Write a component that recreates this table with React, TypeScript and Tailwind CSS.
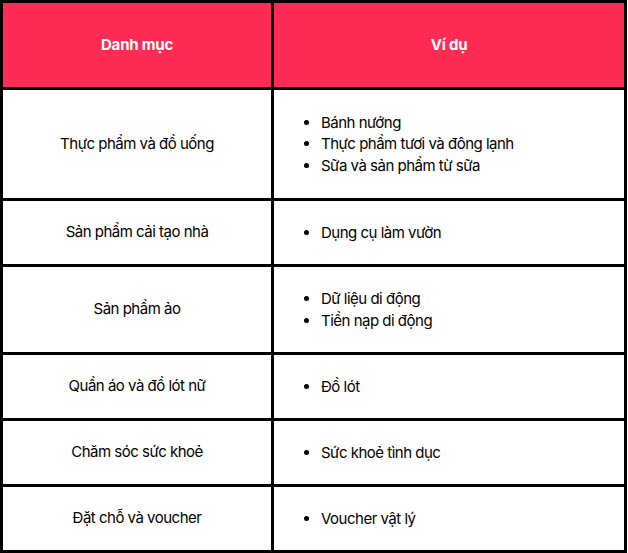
import { Fragment } from 'react';

const rows: { category: string; examples: string[] }[] = [
  {
    category: 'Thực phẩm và đồ uống',
    examples: ['Bánh nướng', 'Thực phẩm tươi và đông lạnh', 'Sữa và sản phẩm từ sữa'],
  },
  { category: 'Sản phẩm cải tạo nhà', examples: ['Dụng cụ làm vườn'] },
  { category: 'Sản phẩm ảo', examples: ['Dữ liệu di động', 'Tiền nạp di động'] },
  { category: 'Quần áo và đồ lót nữ', examples: ['Đồ lót'] },
  { category: 'Chăm sóc sức khoẻ', examples: ['Sức khoẻ tình dục'] },
  { category: 'Đặt chỗ và voucher', examples: ['Voucher vật lý'] },
];

export default function App() {
  return (
    <div className="w-[628px] h-[553px] bg-white" style={{ fontFamily: 'Inter, "Noto Sans", sans-serif' }}>
      <div className="w-[627px] grid grid-cols-[268px_350px] grid-rows-[84px_108px_63px_85px_63px_63px_63px] gap-[3px] p-[3px] bg-black text-[15px] tracking-[-0.5px] text-black">
        <div className="bg-[#fe2c55] flex items-center justify-center font-bold text-white tracking-[-0.2px]">Danh mục</div>
        <div className="bg-[#fe2c55] flex items-center justify-center font-bold text-white tracking-[-0.2px]">Ví dụ</div>
        {rows.map((row) => (
          <Fragment key={row.category}>
            <div className="bg-white flex items-center justify-center">{row.category}</div>
            <div className="bg-white flex items-center">
              <ul className="list-disc pl-[47px] leading-[21.5px]">
                {row.examples.map((ex) => (
                  <li key={ex}>{ex}</li>
                ))}
              </ul>
            </div>
          </Fragment>
        ))}
      </div>
    </div>
  );
}
